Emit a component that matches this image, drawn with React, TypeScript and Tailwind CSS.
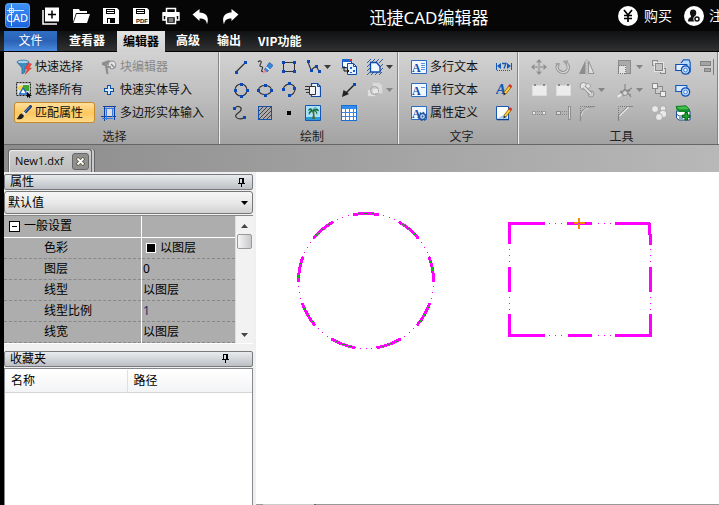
import React from "react";

type Kids = { children?: React.ReactNode };

function Icon({ children, crisp = false, size = 16 }: Kids & { crisp?: boolean; size?: number }) {
  return (
    <svg
      width={size}
      height={size}
      viewBox="0 0 16 16"
      fill="none"
      aria-hidden="true"
      className="block shrink-0"
      shapeRendering={crisp ? "crispEdges" : "auto"}
    >
      {children}
    </svg>
  );
}

/* Blue grip squares shown at the vertices of drawing tools */
function Grips({ at }: { at: [number, number][] }) {
  return (
    <g fill="#0a49b5" shapeRendering="crispEdges">
      {at.map(([x, y]) => (
        <rect key={`${x}-${y}`} x={x} y={y} width="3" height="3" />
      ))}
    </g>
  );
}

/* ---------- selection ---------- */
const FunnelIcon = () => (
  <Icon>
    <path d="M1 3 6 9v6l3-2V9l4-6z" fill="#3f8fc4" stroke="#1d5f92" strokeWidth=".7" />
    <ellipse cx="7" cy="3" rx="6" ry="1.8" fill="#a5d4ee" stroke="#2a6c9f" strokeWidth=".8" />
    <path d="M12.500 4 9 10h2.500L9 15.500l6.500-6.500H13l2.500-4z" fill="#ef4b3c" stroke="#c01f1a" strokeWidth=".4" />
  </Icon>
);
const SelectAllIcon = () => (
  <Icon>
    <path d="M2 2h11v11H2z" fill="#dfe6ea" />
    <rect x=".5" y=".5" width="14" height="13" stroke="#222" strokeDasharray="2 1" />
    <circle cx="5" cy="6" r="2.800" fill="#f7d548" />
    <rect x="7" y="3" width="6" height="6" fill="#3fa535" />
    <path d="m3.500 12 3.500-6 4 6z" fill="#fff" stroke="#1c63c0" strokeWidth="1.300" />
    <path d="M11 10v6l1.500-1.500 1 1.500 1-.6-.8-1.400H16z" fill="#000" />
  </Icon>
);
const BrushIcon = () => (
  <Icon>
    <path d="M14.500 1.500 8.500 8" stroke="#1a3a78" strokeWidth="3" strokeLinecap="round" />
    <path d="M14 1.500 8.500 7.500" stroke="#5b8fd6" strokeWidth="1" />
    <path d="M9 7.500 7.500 9" stroke="#e8e8e8" strokeWidth="3.500" />
    <path d="M5.500 8.500c-3 .8-2.500 4-5 5.500 3 .8 7 0 7.500-3.300z" fill="#222" />
  </Icon>
);
const BlockEditIcon = () => (
  <Icon>
    <path d="M1 3.500 8 1l2 2-4 3 1.500 8.500-2 1L4 7 1 6z" fill="#8d8d8d" />
    <circle cx="11" cy="6" r="3.800" fill="#e6e6e6" stroke="#999" strokeWidth="1.200" />
    <path d="m10 5 4 4M6 8h4" stroke="#888" strokeWidth="1.500" />
  </Icon>
);
const PlusOutlineIcon = () => (
  <Icon crisp>
    <path d="M6.500 3.500h3v3h3v3h-3v3h-3v-3h-3v-3h3z" fill="#d7e8fb" stroke="#0f4ea8" />
  </Icon>
);
const PolygonInputIcon = () => (
  <Icon crisp>
    <path d="M3.500 1v15M13.500 1v14M2 1.500h13M0 11.500h15" stroke="#0d3fa6" />
    <path d="M5.500 3v12M11.500 3v9M4 3.500h9M1 13.500h11" stroke="#3c7be0" />
    <rect x="6" y="4" width="5" height="7" fill="#dcdcdc" />
  </Icon>
);

/* ---------- drawing ---------- */
const LineIcon = () => (
  <Icon>
    <path d="M3 13 13 3" stroke="#333" strokeWidth="1.300" />
    <Grips at={[[2, 12], [11, 2]]} />
  </Icon>
);
const SketchIcon = () => (
  <Icon>
    <path d="M1 3c2-2 4-1 3 1S2 7 4 7.500s2 1 1 3 0 2 1 2" stroke="#333" strokeWidth="1.100" />
    <path d="m7.500 10.500 5-7L16 6.500l-6 6.500z" fill="#3b86dd" stroke="#1556a8" strokeWidth=".7" />
    <path d="m9 8 3.500 3" stroke="#e3effd" strokeWidth="1.500" />
    <path d="M7.500 10.500 5 14.500l5-1.500z" fill="#e58a92" />
  </Icon>
);
const RectToolIcon = () => (
  <Icon crisp>
    <path d="M2.500 3.500h11v9h-11z" stroke="#333" />
    <Grips at={[[1, 2], [12, 2], [1, 11], [12, 11]]} />
  </Icon>
);
const PolylineIcon = () => (
  <Icon>
    <path d="m3 3 3 8 5-4 3 5" stroke="#333" strokeWidth="1.100" />
    <Grips at={[[2, 1], [5, 10], [10, 6], [13, 11]]} />
  </Icon>
);
const CopyBlockIcon = () => (
  <Icon>
    <path d="M1.500.5h9v8h-9z" fill="#fff" stroke="#124aa3" />
    <path d="M1 0h10v3H1z" fill="#1f66cf" />
    <path d="M8 0h2v2H8z" fill="#e03030" />
    <path d="M6.500 4.500h6l3 3v8h-9z" fill="#e9f3ff" stroke="#124aa3" />
    <path d="M12.500 4.500v3h3" stroke="#124aa3" />
    <path d="M3 8v4h5M1 9.500 3 7.500l2 2M6 10l2 2-2 2" stroke="#111" />
    <path d="M9 8h2v2H9zm3 3h2v2h-2zM9 13h2v1H9z" fill="#1f66cf" />
  </Icon>
);
const RegionIcon = () => (
  <Icon>
    <path d="m0 4 4-4m0 4 4-4m0 4 4-4m0 4 4-4M0 8l4-4M0 12l4-4M0 16l4-4m8-3 4-4m-4 8 4-4m-4 7 3-3M4 16l3-3m1 3 3-3" stroke="#264f94" strokeWidth=".9" />
    <path d="M3.500 3.500h6l3.500 4v5.500h-9.500z" fill="#f1f7ff" stroke="#0f49ac" strokeWidth="1.300" />
  </Icon>
);
const CircleIcon = () => (
  <Icon>
    <circle cx="8" cy="8" r="6" stroke="#333" strokeWidth="1.100" />
    <Grips at={[[7, 1], [1, 7], [13, 7], [7, 13]]} />
  </Icon>
);
const EllipseIcon = () => (
  <Icon>
    <ellipse cx="8" cy="8" rx="6.500" ry="4.500" stroke="#333" strokeWidth="1.100" />
    <Grips at={[[7, 2], [0, 7], [13, 7], [7, 12]]} />
  </Icon>
);
const ArcIcon = () => (
  <Icon>
    <path d="M2 7c3-7 11-6 12 0 0 4-3 6-6 7" stroke="#333" strokeWidth="1.100" />
    <Grips at={[[1, 6], [7, 0], [12, 5], [7, 12]]} />
  </Icon>
);
const AttachIcon = () => (
  <Icon>
    <path d="M6.500 1.500h6l3 3v10h-9z" fill="#e9f3ff" stroke="#124aa3" strokeWidth="1.200" />
    <path d="M12.500 1.500v3h3" stroke="#124aa3" />
    <path d="M4.500 4.500h6v8h-6z" fill="#f5f5f5" stroke="#333" />
    <path d="M0 4.500h8M0 7.500h4M1 10.500h3" stroke="#333" />
  </Icon>
);
const LeaderIcon = () => (
  <Icon>
    <path d="M4 12 13 3" stroke="#222" strokeWidth="1.500" />
    <path d="m1 15 1.500-7L5 9.500 8 12z" fill="#222" />
    <Grips at={[[12, 1]]} />
  </Icon>
);
const ShapesGreyIcon = () => (
  <Icon>
    <path d="M5.500.5h7l3 3v8h-10z" fill="#dadada" stroke="#c6c6c6" />
    <path d="M.5 7.500h8v7h-8z" fill="#dedede" stroke="#c2c2c2" />
    <circle cx="7.500" cy="8.500" r="4" fill="#cfcfcf" stroke="#a2a2a2" />
    <path d="M6 7h5v4H6z" fill="#e6e6e6" />
  </Icon>
);
const SplineIcon = () => (
  <Icon>
    <path d="M2 3c3-3 7-1 6 2S1 9 3 12s7 2 9 0" stroke="#333" strokeWidth="1.200" />
    <Grips at={[[0, 2], [10, 11]]} />
  </Icon>
);
const HatchIcon = () => (
  <Icon crisp>
    <path d="M1.500 1.500h13v13h-13z" fill="#aaa" stroke="#1550aa" />
    <path d="m2 6 4-4M2 10l8-8M2 14 14 2M6 14l8-8m-4 8 4-4" stroke="#444" />
  </Icon>
);
const PointIcon = () => (
  <Icon crisp>
    <path d="M6 6h4v4H6z" fill="#000" />
  </Icon>
);
const PictureIcon = () => (
  <Icon>
    <path d="M.5.5h15v15H.5z" fill="#a8e2fb" stroke="#1556b5" />
    <path d="M1 12h14v3H1z" fill="#2a9bd8" />
    <path d="m7 6 2-1 1 9H7l1-4z" fill="#4d6b32" />
    <path d="M8 6C7 3 4 2 3 6c1-1 2-1 3-.5C4 6 3 8 4 10c1-2 2-3 4-4 2 0 3 1 4 4 1-2 0-4-2-4.500 1 0 3 0 4 1 0-3-3-4-5-2 0-2 2-2 3-2-2-1-4 0-4 3.500z" fill="#126b3c" />
  </Icon>
);
const TableIcon = () => (
  <Icon crisp>
    <path d="M.5.5h15v15H.5z" fill="#fff" stroke="#1b6fd0" />
    <path d="M1 1h14v3H1z" fill="#2f8df0" />
    <path d="M1 7.500h14M1 11.500h14M4.500 4v11M8.500 4v11M12.500 4v11" stroke="#3d86dd" />
  </Icon>
);

/* ---------- text ---------- */
const LetterFrame = ({ children }: Kids) => (
  <Icon>
    <path d="M.5 1.500h15v13H.5z" fill="#f3f8ff" stroke="#2d6cc0" />
    <text x="1" y="12.500" fontSize="12" fontWeight="700" fontFamily="Liberation Serif, serif" fill="#0f4eb0">A</text>
    {children}
  </Icon>
);
const MultiTextIcon = () => (
  <LetterFrame>
    <path d="M10 4.500h4M10 6.500h4M10 8.500h4M10 10.500h4" stroke="#5a92dc" />
  </LetterFrame>
);
const SingleTextIcon = () => (
  <LetterFrame>
    <path d="M10 5.500h4" stroke="#5a92dc" />
  </LetterFrame>
);
const AttrTextIcon = () => (
  <LetterFrame>
    <circle cx="11.500" cy="11.500" r="3" fill="#c9defa" stroke="#27569d" strokeWidth="1.300" />
    <circle cx="11.500" cy="11.500" r="4" stroke="#27569d" strokeWidth="1.500" strokeDasharray="1.500 1.600" />
    <circle cx="11.500" cy="11.500" r="1" fill="#27569d" />
  </LetterFrame>
);
const TextFitIcon = () => (
  <Icon>
    <path d="M1 7 5 4v6zM15 7l-4-3v6z" fill="#1458b8" />
    <path d="M.5 4v7M15.500 4v7" stroke="#1458b8" />
    <path d="M6 4.500h4L8 9.500" stroke="#1458b8" strokeWidth="1.300" />
    <path d="M1 11.500h14" stroke="#1458b8" strokeDasharray="1 1" />
  </Icon>
);
const Pencil = () => (
  <>
    <path d="m9 11 5.500-7" stroke="#8d5b00" strokeWidth="3.200" />
    <path d="m9 11 5.500-7" stroke="#ffd23d" strokeWidth="2" />
    <path d="m13.500 5 1.500-2" stroke="#d8322c" strokeWidth="3" />
    <path d="m7.500 13.500.3-3 2.200 1.500z" fill="#222" />
  </>
);
const TextStyleIcon = () => (
  <Icon>
    <text x="0" y="12" fontSize="15" fontWeight="700" fontStyle="italic" fontFamily="Liberation Serif, serif" fill="#1356b4">A</text>
    <Pencil />
  </Icon>
);
const EditTextIcon = () => (
  <Icon>
    <path d="M.5 1.500h12v13H.5z" fill="#fff" stroke="#1b58b0" />
    <path d="M2 13h9V8z" fill="#a9cbf3" />
    <path d="M1 14.500h12" stroke="#0f4390" strokeWidth="1.500" />
    <Pencil />
  </Icon>
);

/* ---------- tools ---------- */
const MoveIcon = () => (
  <Icon>
    <path d="M8 1v14M1 8h14" stroke="#8a8a8a" strokeWidth="1.500" />
    <path d="m8 0 3 3.500H5zM8 16l3-3.500H5zM0 8l3.500-3v6zM16 8l-3.500-3v6z" fill="#8f8f8f" />
    <path d="M8 3v10M3 8h10" stroke="#ccc" strokeWidth=".6" />
  </Icon>
);
const RotateIcon = () => (
  <Icon>
    <path d="M3 5c-3 5 2 9 6 8.500S15 8 11.500 4" stroke="#8b8b8b" strokeWidth="3" />
    <path d="M3 5c-3 5 2 9 6 8.500S15 8 11.500 4" stroke="#d5d5d5" strokeWidth="1.300" />
    <path d="M13 1 7.500 2 12 7zM0 4h5L4 8z" fill="#a3a3a3" />
  </Icon>
);
const MirrorIcon = () => (
  <Icon>
    <path d="M6.500 1v14H0z" fill="#8d8d8d" />
    <path d="M9.500 2v12.500h5.500z" fill="#ddd" stroke="#949494" />
    <path d="M8 0v16" stroke="#aaa" strokeDasharray="2 1" />
  </Icon>
);
const ScaleIcon = () => (
  <Icon crisp>
    <path d="M1.500 1.500h12v13h-12z" fill="#aaa" stroke="#8b8b8b" />
    <path d="M1.500 6.500h7v8h-7z" fill="#e2e2e2" stroke="#777" strokeDasharray="1 1" />
  </Icon>
);
const FrontIcon = () => (
  <Icon crisp>
    <path d="M1.500 1.500h5v5h-5zM9.500 9.500h5v5h-5z" fill="#ddd" stroke="#898989" />
    <path d="M3.500 3.500h9v9h-9z" stroke="#e6e6e6" />
    <path d="M4.500 4.500h7v7h-7z" fill="#c3c3c3" stroke="#888" />
  </Icon>
);
const BackIcon = () => (
  <Icon crisp>
    <path d="M4.500 4.500h7v7h-7z" fill="#ccc" stroke="#8b8b8b" />
    <path d="M1.500 1.500h5v5h-5zM9.500 9.500h5v5h-5z" fill="#eee" stroke="#898989" />
  </Icon>
);
const BlueShapesIcon = () => (
  <Icon>
    <path d="M6 4 8.500.8H14l1.200 2.700v9L13 15" fill="#b9d9ff" stroke="#1458b8" strokeWidth="1.200" />
    <path d="M.8 5.500h11v6h-11z" fill="#e2efff" stroke="#0f4eb0" strokeWidth="1.200" />
    <circle cx="10.500" cy="11" r="4.200" fill="#b9d9ff" stroke="#0f4eb0" strokeWidth="1.200" />
    <circle cx="10.500" cy="11" r="1.800" fill="#fff" stroke="#3e7ed4" />
  </Icon>
);
const BlueShapesSmallIcon = () => (
  <Icon>
    <path d="M.8 3.500h11v6h-11z" fill="#d7e9ff" stroke="#1458b8" strokeWidth="1.200" />
    <circle cx="10.500" cy="10" r="4.200" fill="#b9d9ff" stroke="#0f4eb0" strokeWidth="1.200" />
    <circle cx="10.500" cy="10" r="1.800" fill="#fff" stroke="#3e7ed4" />
  </Icon>
);
const AlignRightIcon = () => (
  <Icon crisp>
    <path d="M1.500 2.500h10v4h-10zM5.500 9.500h6v3h-6z" fill="#a3a3a3" stroke="#818181" />
    <path d="M14 0v16" stroke="#7d7d7d" />
  </Icon>
);
const NoteIcon = () => (
  <Icon crisp>
    <path d="M1.500 3.500h14v10h-14z" fill="#ececec" stroke="#dcdcdc" />
    <path d="M3 2h2v2H3zM12 2h2v2h-2z" fill="#888" />
  </Icon>
);
const LinkIcon = () => (
  <Icon>
    <circle cx="4.500" cy="4" r="3.500" fill="#e3e3e3" stroke="#969696" />
    <circle cx="12" cy="12" r="3" fill="#ccc" stroke="#969696" />
    <circle cx="9" cy="4" r="2.500" fill="#e3e3e3" stroke="#a5a5a5" />
    <path d="m5 5 7 7" stroke="#8f8f8f" strokeWidth="3.500" />
    <path d="m5 5 7 7" stroke="#e2e2e2" strokeWidth="1.800" />
  </Icon>
);
const ExplodeIcon = () => (
  <Icon>
    <path d="m2 13 6-6 2 2 5-3M3 9l11 4M8 2v5M6 14l7-6M10 9l4 6" stroke="#858585" strokeWidth="1.100" />
    <circle cx="8" cy="11" r="2.500" fill="#d7d7d7" stroke="#909090" />
    <path d="m1 15 3-3" stroke="#eee" strokeWidth="2" />
  </Icon>
);
const BreakIcon = () => (
  <Icon crisp>
    <path d="M1.500 6.500h3v3h-3zM11.500 6.500h3v3h-3z" fill="#eee" stroke="#9a9a9a" />
    <path d="M6 6.500h5M6 9.500h5" stroke="#888" strokeDasharray="1 1" />
  </Icon>
);
const ExtendIcon = () => (
  <Icon crisp>
    <path d="M1.500 6.500h4v3h-4z" fill="#ddd" stroke="#8a8a8a" />
    <path d="M7 6.500h5M7 9.500h5" stroke="#888" strokeDasharray="1 1" />
    <path d="M13.500 1.500h2v13h-2z" fill="#ddd" stroke="#909090" />
  </Icon>
);
const FilletIcon = () => (
  <Icon>
    <path d="M1.500 16V1.500H16" stroke="#777" strokeDasharray="1 1" />
    <path d="M1.500 16v-5c0-5 4-9.500 14.500-9.500" stroke="#8a8a8a" strokeWidth="1.200" />
    <path d="M2.500 11c0-4 3-7 7-8" stroke="#ddd" />
  </Icon>
);
const ChamferIcon = () => (
  <Icon>
    <path d="M1.500 16V1.500H16" stroke="#777" strokeDasharray="1 1" />
    <path d="M1.500 16v-5l9-9.500H16" stroke="#858585" strokeWidth="1.200" />
    <path d="m2.500 11 9-9" stroke="#e8e8e8" strokeWidth="1.200" />
  </Icon>
);
const GroupCirclesIcon = () => (
  <Icon>
    <g fill="#e9e9e9" stroke="#a2a2a2" strokeWidth=".8">
      <circle cx="4" cy="4" r="3.500" />
      <circle cx="12" cy="3.500" r="2.800" />
      <circle cx="12" cy="9" r="3.800" />
      <circle cx="8" cy="12" r="3.500" />
    </g>
  </Icon>
);
const LibraryIcon = () => (
  <Icon>
    <path d="M1.500 6H15v9H4l-2.500-2z" fill="#fff" stroke="#1b4f8c" />
    <path d="M1 1.500 11 .8l4 4.200H4z" fill="#43c04c" stroke="#0d7a22" />
    <path d="M1 2v2l3 3h11V5H4z" fill="#0f8a2c" />
    <path d="m1.500 9 2.500 2h4M4 13h4" stroke="#1b4f8c" />
    <path d="M10 7.500h2.500V10H15v2.500h-2.500V15H10v-2.500H7.500V10H10z" fill="#19a32e" stroke="#07641a" />
  </Icon>
);

const Caret = ({ muted = false }: { muted?: boolean }) => (
  <svg width="7" height="4" viewBox="0 0 7 4" aria-hidden="true" className="block shrink-0">
    <path d="M0 0h7L3.500 4z" fill={muted ? "#858585" : "#3a3a3a"} />
  </svg>
);

/* ---------- ribbon ---------- */
function Tool({ label, children, caret, muted }: Kids & { label: string; caret?: boolean; muted?: boolean }) {
  return (
    <button type="button" aria-label={label} className="flex h-[23px] items-center gap-[3px]">
      {children}
      {caret && <Caret muted={muted} />}
    </button>
  );
}

function TextTool({ label, icon, active, disabled }: { label: string; icon: React.ReactNode; active?: boolean; disabled?: boolean }) {
  return (
    <button
      type="button"
      disabled={disabled}
      className={`flex h-[21px] items-center gap-[3px] rounded-[3px] border pl-px pr-[11px] whitespace-nowrap ${
        active ? "border-[#c58b2b] bg-linear-to-b from-[#ffdf9c] via-[#fdc85d] to-[#ffd988]" : "border-transparent"
      } ${disabled ? "text-[#888]" : "text-[#111]"}`}
    >
      {icon}
      {label}
    </button>
  );
}

function Group({ title, className, children }: Kids & { title: string; className: string }) {
  return (
    <section
      aria-label={title}
      className={`flex shrink-0 flex-col border-r border-[#eee] pt-[3px] shadow-[inset_-1px_0_0_#858585] ${className}`}
    >
      {children}
      <h2 className="pl-1.5 pt-1 text-center leading-4 text-[#222]">{title}</h2>
    </section>
  );
}

/* ---------- quick access ---------- */
const QuickButton = ({ label, children }: Kids & { label: string }) => (
  <button type="button" aria-label={label} className="flex h-5 w-[30px] shrink-0 items-center justify-center text-white">
    <svg width="18" height="18" viewBox="0 0 18 18" fill="none" aria-hidden="true">
      {children}
    </svg>
  </button>
);

function TitleBar() {
  return (
    <header className="flex h-[31px] shrink-0 items-center overflow-hidden bg-[#060606] pl-[5px] text-white">
      <svg width="25" height="25" viewBox="0 0 25 25" className="mr-1.5 shrink-0" role="img" aria-label="CAD">
        <defs>
          <linearGradient id="logo" x1="0" y1="0" x2="0" y2="1">
            <stop offset="0" stopColor="#3f92f5" />
            <stop offset="1" stopColor="#1c63dc" />
          </linearGradient>
        </defs>
        <rect x=".5" y=".5" width="24" height="24" rx="3" fill="url(#logo)" stroke="#5aa2f8" />
        <path d="M6.500 1v22M2 7.500h17M4.500 5.500h4v4h-4z" stroke="#d7e9ff" fill="none" />
        <text x="1" y="19" fontSize="11" fontFamily="Noto Sans, sans-serif" fill="#fff">CAD</text>
      </svg>
      <QuickButton label="新建">
        <path d="M3 .5h14v14H3z" fill="#fff" />
        <path d="M1 3v14h14" stroke="#fff" strokeWidth="1.500" />
        <path d="M10 3.500v8M6 7.500h8" stroke="#000" strokeWidth="1.500" />
      </QuickButton>
      <QuickButton label="打开">
        <path d="M1 15V2h6l1 2h7v2H4z" fill="#fff" />
        <path d="M4.500 7H18l-3 9H1.500z" fill="#fff" />
      </QuickButton>
      <QuickButton label="保存">
        <path d="M1 1h14l2 2v14H1z" fill="#fff" />
        <path d="M4 2h9v5H4zM5 11h8v5H5z" fill="#000" />
        <path d="M5 3.500h7M5 5.500h7" stroke="#fff" />
        <path d="M6 12h2v4H6z" fill="#fff" />
      </QuickButton>
      <QuickButton label="保存为 PDF">
        <path d="M1 1h14l2 2v14H1z" fill="#fff" />
        <path d="M4 2h9v5H4z" fill="#000" />
        <path d="M5 3.500h7M5 5.500h7" stroke="#fff" />
        <text x="4" y="15.500" fontSize="6" fontWeight="700" fontFamily="Liberation Sans, sans-serif" fill="#222">PDF</text>
      </QuickButton>
      <QuickButton label="打印">
        <path d="M4.500 5V1.500h9V5M1 6h16v7h-3v-3H4v3H1z" stroke="#fff" strokeWidth="1.500" fill="none" />
        <path d="M1 5h16v4H1z" fill="#fff" />
        <path d="M4.500 9.500h9v7h-9z" stroke="#fff" strokeWidth="1.500" fill="#000" />
        <path d="M6.500 12h5M6.500 14h5" stroke="#fff" />
      </QuickButton>
      <QuickButton label="撤销">
        <path d="M.5 7.500 7.500 2v3.500C13 5.500 18 9 15 17.500c-.5-4.500-3-6-7.500-6V14z" fill="#fff" />
      </QuickButton>
      <QuickButton label="重做">
        <path d="M16.500 7.500 9.500 2v3.500C4 5.500-1 9 2 17.500c.5-4.500 3-6 7.500-6V14z" fill="#fff" />
      </QuickButton>
      <h1 className="min-w-0 flex-1 pr-1.5 pt-1 text-center text-[17px] leading-6">迅捷CAD编辑器</h1>
      <div className="flex shrink-0 items-center gap-3 text-sm">
        <button type="button" className="flex items-center gap-1.5">
          <svg width="20" height="20" viewBox="0 0 20 20" fill="none" aria-hidden="true">
            <circle cx="10" cy="10" r="10" fill="#fff" />
            <path d="m6 4 4 5 4-5M10 9v7M6 9.500h8M6 12.500h8" stroke="#000" strokeWidth="1.700" />
          </svg>
          购买
        </button>
        <button type="button" className="-mr-1 flex items-center gap-[5px]">
          <svg width="20" height="20" viewBox="0 0 20 20" fill="none" aria-hidden="true">
            <circle cx="10" cy="10" r="10" fill="#fff" />
            <path d="M9 3.500c4 0 4 4.500 2 7l1 5H4c0-3 1-3.500 3-4.500v-1c-2-3-1-6.500 2-6.500z" fill="#111" />
            <circle cx="13" cy="13" r="3.600" fill="#fff" />
            <circle cx="13" cy="13" r="2" stroke="#111" strokeWidth="1.500" />
          </svg>
          注
        </button>
      </div>
    </header>
  );
}

function RibbonTabs() {
  return (
    <nav className="flex h-[21px] shrink-0 border-b border-black bg-linear-to-b from-[#101112] to-[#303133] pl-1 font-semibold text-white">
      <button type="button" className="w-[53px] bg-linear-to-b from-[#2f6fc5] via-[#2a62b5] to-[#4b8be0] font-normal">文件</button>
      <button type="button" className="px-3">查看器</button>
      <button type="button" aria-current="page" className="-mb-px bg-linear-to-b from-[#e4e4e4] to-[#d0d0d0] px-1.5 text-black">编辑器</button>
      <button type="button" className="px-[11px]">高级</button>
      <button type="button" className="px-1.5">输出</button>
      <button type="button" className="px-[11px] font-['Noto_Sans_CJK_SC',sans-serif]">VIP功能</button>
    </nav>
  );
}

function Ribbon() {
  return (
    <div className="ml-1 flex h-[93px] shrink-0 overflow-hidden border-b border-[#666] bg-linear-to-b from-[#d2d2d2] via-[#bdbdbd] to-[#a2a2a2]">
      <Group title="选择" className="w-[216px]">
        <div className="grid h-[70px] shrink-0 auto-rows-[23px] grid-cols-[85px_auto] content-start items-center justify-start pl-2.5">
          <TextTool label="快速选择" icon={<FunnelIcon />} />
          <TextTool label="块编辑器" icon={<BlockEditIcon />} disabled />
          <TextTool label="选择所有" icon={<SelectAllIcon />} />
          <TextTool label="快速实体导入" icon={<PlusOutlineIcon />} />
          <div className="flex"><TextTool label="匹配属性" icon={<BrushIcon />} active /></div>
          <TextTool label="多边形实体输入" icon={<PolygonInputIcon />} />
        </div>
      </Group>
      <Group title="绘制" className="w-[179px]">
        <div className="grid h-[70px] shrink-0 grid-cols-[24px_24px_24px_36px_26px_28px] content-start pl-[13px]">
          <Tool label="直线"><LineIcon /></Tool>
          <Tool label="草图"><SketchIcon /></Tool>
          <Tool label="矩形"><RectToolIcon /></Tool>
          <Tool label="多段线" caret><PolylineIcon /></Tool>
          <Tool label="块"><CopyBlockIcon /></Tool>
          <Tool label="面域" caret><RegionIcon /></Tool>
          <Tool label="圆"><CircleIcon /></Tool>
          <Tool label="椭圆"><EllipseIcon /></Tool>
          <Tool label="圆弧"><ArcIcon /></Tool>
          <Tool label="附着"><AttachIcon /></Tool>
          <Tool label="引线"><LeaderIcon /></Tool>
          <Tool label="形状" caret muted><ShapesGreyIcon /></Tool>
          <Tool label="样条曲线"><SplineIcon /></Tool>
          <Tool label="填充"><HatchIcon /></Tool>
          <Tool label="点"><PointIcon /></Tool>
          <Tool label="图像"><PictureIcon /></Tool>
          <Tool label="表格"><TableIcon /></Tool>
        </div>
      </Group>
      <Group title="文字" className="w-[120px]">
        <div className="grid h-[70px] shrink-0 grid-cols-[87px_auto] content-start items-center justify-start pl-2.5">
          <TextTool label="多行文本" icon={<MultiTextIcon />} />
          <Tool label="调整文字"><TextFitIcon /></Tool>
          <TextTool label="单行文本" icon={<SingleTextIcon />} />
          <Tool label="文字样式"><TextStyleIcon /></Tool>
          <TextTool label="属性定义" icon={<AttrTextIcon />} />
          <Tool label="编辑文字"><EditTextIcon /></Tool>
        </div>
      </Group>
      <Group title="工具" className="min-w-[200px] flex-1">
        <div className="grid h-[70px] shrink-0 grid-cols-[24px_24px_38px_34px_24px_24px_24px] content-start pl-3">
          <Tool label="移动"><MoveIcon /></Tool>
          <Tool label="旋转"><RotateIcon /></Tool>
          <Tool label="镜像"><MirrorIcon /></Tool>
          <Tool label="缩放" caret muted><ScaleIcon /></Tool>
          <Tool label="置前"><FrontIcon /></Tool>
          <Tool label="编辑实体"><BlueShapesIcon /></Tool>
          <Tool label="右对齐"><AlignRightIcon /></Tool>
          <Tool label="复制"><NoteIcon /></Tool>
          <Tool label="粘贴"><NoteIcon /></Tool>
          <Tool label="连接" caret muted><LinkIcon /></Tool>
          <Tool label="分解" caret muted><ExplodeIcon /></Tool>
          <Tool label="置后"><BackIcon /></Tool>
          <div className="col-span-2 flex"><Tool label="实体"><BlueShapesSmallIcon /></Tool></div>
          <Tool label="打断"><BreakIcon /></Tool>
          <Tool label="延伸"><ExtendIcon /></Tool>
          <Tool label="圆角"><FilletIcon /></Tool>
          <Tool label="倒角"><ChamferIcon /></Tool>
          <Tool label="编组"><GroupCirclesIcon /></Tool>
          <Tool label="图库"><LibraryIcon /></Tool>
        </div>
      </Group>
    </div>
  );
}

/* ---------- side panels ---------- */
const PinButton = () => (
  <button type="button" aria-label="固定面板" className="flex">
    <svg width="9" height="9" viewBox="0 0 9 9" fill="none" aria-hidden="true" shapeRendering="crispEdges">
      <path d="M2.500 5V.5h4V5M1 5.500h7M4.500 6v3" stroke="#000" />
      <path d="M5 1h1v4H5z" fill="#000" />
    </svg>
  </button>
);

function PanelTitle({ title, pad }: { title: string; pad: string }) {
  return (
    <div className={`flex h-4 items-center justify-between rounded-[2px] border border-[#77797c] bg-linear-to-b from-[#e9ebed] to-[#bcc0c5] pl-[5px] ${pad}`}>
      <h2 className="leading-4">{title}</h2>
      <PinButton />
    </div>
  );
}

const properties = [
  { name: "色彩", value: "以图层", swatch: true },
  { name: "图层", value: "0" },
  { name: "线型", value: "以图层" },
  { name: "线型比例", value: "1", blue: true },
  { name: "线宽", value: "以图层" },
];

function PropertiesPanel() {
  return (
    <section aria-label="属性">
      <PanelTitle title="属性" pad="pr-1.5" />
      <div className="relative mt-px">
        <select
          aria-label="默认值"
          className="block h-[23px] w-full appearance-none rounded-[3px] border border-[#777] bg-linear-to-b from-[#f6f6f6] via-[#e9e9e9] to-[#d2d2d2] pl-[3px] pr-5 text-black"
        >
          <option>默认值</option>
        </select>
        <span className="pointer-events-none absolute right-[5px] top-2.5">
          <svg width="7" height="4" viewBox="0 0 7 4" aria-hidden="true" className="block"><path d="M0 0h7L3.500 4z" fill="#000" /></svg>
        </span>
      </div>
      <div className="mt-px flex border-b border-t border-b-white border-t-[#888] bg-[#f2f2f2]">
        <table className="min-w-0 flex-1 table-fixed border-collapse bg-[#adadad] text-left text-black">
          <colgroup>
            <col className="w-[137px]" />
            <col className="w-[93px]" />
          </colgroup>
          <thead>
            <tr className="h-[21px] border-b border-white">
              <th className="border-r border-white p-0 pl-[5px] font-normal">
                <button type="button" className="flex items-center gap-1 leading-5">
                  <svg width="11" height="11" viewBox="0 0 11 11" aria-hidden="true" shapeRendering="crispEdges">
                    <path d="M.5.5h10v10H.5z" fill="#fff" stroke="#000" />
                    <path d="M3 5.500h5" stroke="#000" />
                  </svg>
                  一般设置
                </button>
              </th>
              <td className="p-0" />
            </tr>
          </thead>
          <tbody>
            {properties.map((p) => (
              <tr key={p.name} className="h-[21px] border-b border-dashed border-[#888]">
                <th className="border-r border-solid border-r-white p-0 pl-10 font-normal leading-5">{p.name}</th>
                <td className={`p-0 pl-px leading-5 ${p.blue ? "text-[#1c2c66]" : ""}`}>
                  <span className="flex items-center">
                    {p.swatch && <span className="ml-[3px] mr-1 size-2.5 border border-white bg-black" />}
                    {p.value}
                  </span>
                </td>
              </tr>
            ))}
          </tbody>
        </table>
        <div className="flex w-[18px] flex-col items-center justify-between border-l border-[#ddd] pb-1.5 pt-2" aria-hidden="true">
          <div className="flex flex-col items-center gap-1.5">
            <svg width="7" height="4" viewBox="0 0 7 4"><path d="M0 4h7L3.500 0z" fill="#444" /></svg>
            <div className="h-[15px] w-[15px] rounded-[2px] border border-[#999] bg-linear-to-r from-[#f5f5f5] to-[#c8c8cc]" />
          </div>
          <svg width="7" height="4" viewBox="0 0 7 4"><path d="M0 0h7L3.500 4z" fill="#444" /></svg>
        </div>
      </div>
    </section>
  );
}

function FavoritesPanel() {
  return (
    <section aria-label="收藏夹" className="mt-[7px] flex flex-1 flex-col">
      <PanelTitle title="收藏夹" pad="pr-[22px]" />
      <div className="mt-px flex-1 border border-b-0 border-[#85888c] bg-white pt-px">
        <table className="w-full table-fixed border-collapse text-left">
          <thead>
            <tr className="h-[23px] border-b border-[#d5d5d5] bg-linear-to-b from-white to-[#f3f4f5]">
              <th className="w-[122px] border-r border-[#dedfe1] p-0 pl-1.5 font-normal">名称</th>
              <th className="p-0 pl-1.5 font-normal">路径</th>
            </tr>
          </thead>
        </table>
      </div>
    </section>
  );
}

/* ---------- drawing canvas ---------- */
const CX = 110;
const CY = 109;
const R = 67.5;
const polar = (deg: number) => {
  const a = (deg * Math.PI) / 180;
  return [CX + R * Math.cos(a), CY + R * Math.sin(a)];
};
const arcs = Array.from({ length: 9 }, (_, i) => {
  const mid = -90 + i * 40;
  const [x1, y1] = polar(mid - 10);
  const [x2, y2] = polar(mid + 10);
  return {
    path: `M${x1} ${y1}A${R} ${R} 0 0 1 ${x2} ${y2}`,
    dots: [15, 20, 25].map((d) => polar(mid + d)),
  };
});
const dotsAcross = [293, 299, 305, 342, 348, 354];
const dotsDown = [77, 83, 89, 125, 131, 137];

function Canvas() {
  return (
    <main className="flex min-w-0 flex-1 flex-col bg-white">
      <div className="min-h-0 flex-1 overflow-hidden">
        <svg width="463" height="332" viewBox="0 0 463 332" fill="none" role="img" aria-label="New1.dxf" className="block">
          <g shapeRendering="crispEdges">
            {arcs.map((a) => (
              <g key={a.path}>
                <path d={a.path} stroke="#f0f" strokeWidth="3" strokeLinecap="round" />
                <path d={a.path} stroke="#00c800" strokeDasharray="3 4" strokeDashoffset="-3" />
                {a.dots.map(([x, y]) => (
                  <rect key={x} x={Math.floor(x)} y={Math.floor(y)} width="1" height="1" fill="#f0f" />
                ))}
              </g>
            ))}
            <path
              d="M253 51.500h36M311 51.500h25M359 51.500h35M253 163.500h36M312 163.500h24M359 163.500h36M253.500 50v22M253.500 95v25M253.500 142v23M393.500 51v12M394.500 62v11M394.500 95v25M394.500 142v23"
              stroke="#f0f"
              strokeWidth="3"
            />
            <g fill="#f0f">
              {dotsAcross.map((x) => (
                <React.Fragment key={x}>
                  <rect x={x} y="51" width="1" height="1" />
                  <rect x={x} y="163" width="1" height="1" />
                </React.Fragment>
              ))}
              {dotsDown.map((y) => (
                <React.Fragment key={y}>
                  <rect x="253" y={y} width="1" height="1" />
                  <rect x="394" y={y} width="1" height="1" />
                </React.Fragment>
              ))}
            </g>
            <path d="M323 46v11M318 51h11" stroke="#f58a0a" strokeWidth="2" />
            <rect x="322" y="51" width="2" height="1" fill="#f0f" />
          </g>
        </svg>
      </div>
      <div className="flex h-px shrink-0 bg-[#999]">
        <div className="ml-[7px] w-[51px] bg-[#ccc]" />
        <div className="w-0.5 bg-[#666]" />
      </div>
    </main>
  );
}

export default function App() {
  return (
    <div className="flex h-screen flex-col overflow-hidden bg-black font-['Noto_Sans','Noto_Sans_CJK_SC',sans-serif] text-xs text-black">
      <TitleBar />
      <RibbonTabs />
      <Ribbon />
      <div className="ml-1 flex h-[27px] shrink-0 items-end bg-linear-to-r from-[#8c8c8c] to-[#b8b8b8] pl-1">
        <div className="flex h-[23px] items-center gap-2 rounded-t-[3px] border border-b-0 border-[#666] bg-linear-to-b from-[#d0d0d0] to-[#bcbcbc] pl-1.5 pr-0.5 shadow-[inset_1px_1px_0_#eee,2px_0_0_#c9c9c9,3px_0_0_#666]">
          <span className="text-[11px] text-[#111]">New1.dxf</span>
          <button type="button" aria-label="关闭" className="flex size-[17px] items-center justify-center rounded-[3px] border border-[#666] bg-[#8f8f8f]">
            <svg width="9" height="9" viewBox="0 0 9 9" fill="none" aria-hidden="true">
              <path d="m1 1 7 7M8 1 1 8" stroke="#5a5230" strokeWidth="3.200" />
              <path d="m1.500 1.500 6 6M7.500 1.500l-6 6" stroke="#fff" strokeWidth="1.800" />
            </svg>
          </button>
        </div>
      </div>
      <div className="ml-1 flex min-h-0 flex-1 bg-[#f0f0f0]">
        <aside className="flex w-[252px] shrink-0 flex-col pr-[3px] pt-0.5">
          <PropertiesPanel />
          <FavoritesPanel />
        </aside>
        <Canvas />
      </div>
    </div>
  );
}
